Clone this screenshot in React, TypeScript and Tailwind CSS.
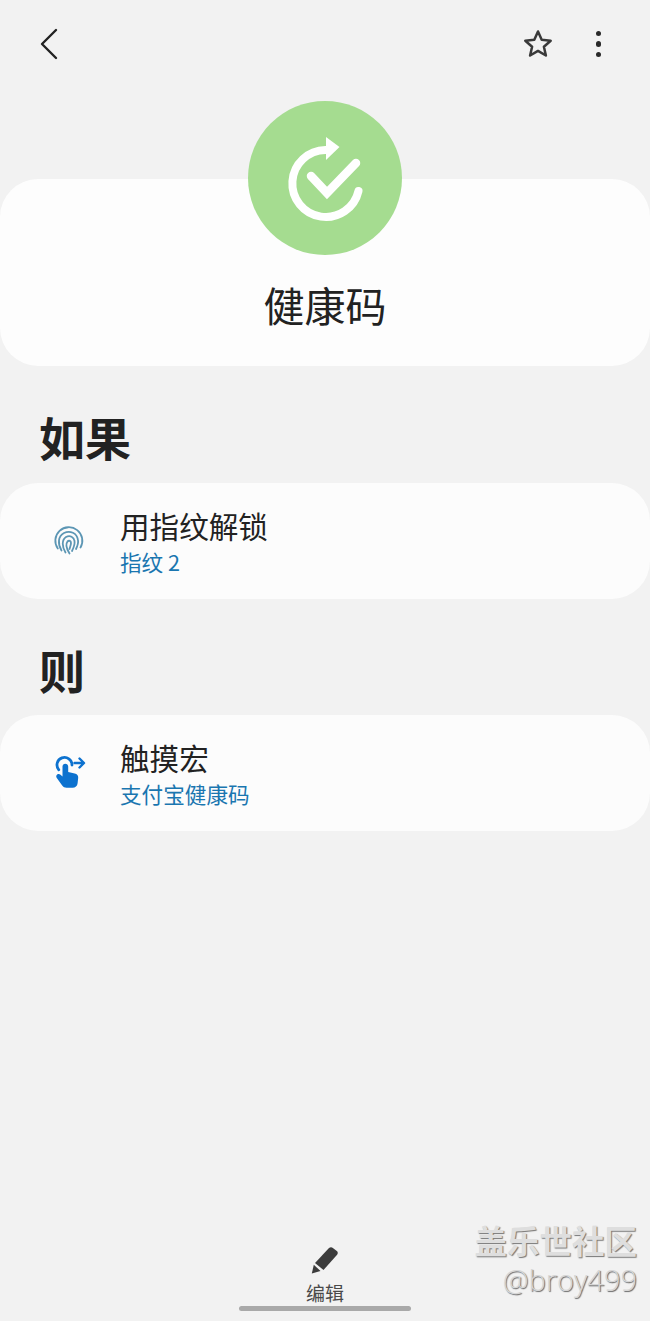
const cjk = { fontFamily: '"Noto Sans CJK SC", "Noto Sans", sans-serif' };

function Fingerprint() {
  return (
    <svg width="32" height="32" viewBox="0 0 32 32" fill="none" stroke="#5c96b4" strokeWidth="1.800" strokeLinecap="round">
      <path d="M4.800 23.500A13.500 13.500 0 1 1 27.500 22.500" />
      <path d="M8.500 25.500C4.500 19 5 11 11 8c6-3 13 0 14 7 .5 3-.5 6-2 9" />
      <path d="M12.500 27.500C9 22 8.500 15 13 12c4-2 8 0 8.500 4 .5 3-1 7-2.500 10" />
      <path d="M16.500 28.500C13 23 12.500 19 14.500 16.500c1.500-1.500 3.500-.5 3.500 1.500 0 2-1 4-1.500 6" />
    </svg>
  );
}

function TouchMacro() {
  return (
    <svg width="34" height="36" viewBox="0 0 34 36" fill="none">
      <path d="M6.800 14.800A7.500 7.500 0 1 1 20 10" stroke="#0d72cf" strokeWidth="2.800" strokeLinecap="round" />
      <path d="M22.500 8h9M27.500 3.500l4.500 4.500-4.500 4.500" stroke="#0d72cf" strokeWidth="2.400" strokeLinecap="round" strokeLinejoin="round" />
      <path
        d="M10.500 11.500c0-1.700 1.200-2.800 2.800-2.800s2.900 1.100 2.900 2.800v5.500l6.500 1.500c2.400.5 3.700 2.200 3.500 4.300l-.6 5.400c-.3 2.800-2.300 4.500-5 4.500h-6c-2 0-3.300-.7-4.400-2.200L4.800 23c-.9-1.300-.7-2.700.4-3.500 1-.7 2.300-.6 3.300.3l2 1.800z"
        fill="#0d72cf"
      />
    </svg>
  );
}

function Row({ icon, title, sub }: { icon: React.ReactNode; title: string; sub: string }) {
  return (
    <div className="flex h-[116px] items-center rounded-[38px] bg-[#fcfcfc]">
      <div className="flex w-[120px] shrink-0 justify-center pl-[18px]">{icon}</div>
      <div className="flex flex-col">
        <div className="text-[29.600px] leading-[40px] text-[#222222]">{title}</div>
        <div className="mt-[1px] text-[21.600px] leading-[30px] text-[#1a76b0]">{sub}</div>
      </div>
    </div>
  );
}

export default function App() {
  return (
    <div className="relative flex h-[1321px] w-[650px] flex-col overflow-hidden bg-[#f2f2f2]" style={cjk}>
      <header className="flex h-[101px] shrink-0 items-start justify-between pt-[27px]">
        <button className="ml-[38px]">
          <svg width="22" height="34" viewBox="0 0 22 34" fill="none" stroke="#222222" strokeWidth="2.400" strokeLinecap="round" strokeLinejoin="round">
            <path d="M18 3 4 17l14 14" />
          </svg>
        </button>
        <div className="mr-[49px] flex h-[34px] items-center gap-[43px]">
          <svg width="30" height="30" viewBox="0 0 30 30" fill="none" stroke="#3a3a3a" strokeWidth="2.500" strokeLinejoin="round">
            <path d="M15 2.500l3.700 8.300 9 .9-6.800 6 2 8.800-7.900-4.600-7.900 4.600 2-8.800-6.800-6 9-.9z" />
          </svg>
          <div className="flex flex-col gap-[5px]">
            <span className="h-[5.500px] w-[5.500px] rounded-full bg-[#2a2a2a]" />
            <span className="h-[5.500px] w-[5.500px] rounded-full bg-[#2a2a2a]" />
            <span className="h-[5.500px] w-[5.500px] rounded-full bg-[#2a2a2a]" />
          </div>
        </div>
      </header>

      <div className="relative z-10 mx-auto -mb-[76px] flex h-[154px] w-[154px] shrink-0 items-center justify-center rounded-full bg-[#a5dc90]">
        <svg width="154" height="154" viewBox="0 0 154 154" fill="none">
          <path d="M110.500 90a33.500 33.500 0 1 1-33-41" stroke="#fff" strokeWidth="8" strokeLinecap="round" />
          <path d="M78 36l13.500 10L78 59z" fill="#fff" />
          <path d="M63 75l16 17 29-30" stroke="#fff" strokeWidth="8.500" strokeLinecap="round" />
        </svg>
      </div>

      <section className="flex h-[187px] shrink-0 items-end justify-center rounded-[38px] bg-[#fdfdfd] pb-[33px]">
        <h1 className="text-[41px] leading-[58px] font-normal text-[#222222]">健康码</h1>
      </section>

      <h2 className="mt-[40px] ml-[39px] text-[46px] leading-[60px] font-semibold text-[#222222]">如果</h2>
      <div className="mt-[17px]">
        <Row icon={<Fingerprint />} title="用指纹解锁" sub="指纹 2" />
      </div>

      <h2 className="mt-[40px] ml-[39px] text-[46px] leading-[60px] font-semibold text-[#222222]">则</h2>
      <div className="mt-[16px]">
        <Row icon={<TouchMacro />} title="触摸宏" sub="支付宝健康码" />
      </div>

      <footer className="mt-auto flex shrink-0 flex-col items-center pb-[10px]">
        <svg className="mb-[6px]" width="30" height="28" viewBox="0 0 30 28" fill="#3c3c3c">
          <path d="M19 2c1.200-1 2.700-1 3.900-.1l3.900 3c1.200 1 1.300 2.600.3 3.800L13.500 24 5 17z" />
          <path d="M3.800 18.800 10.500 25 1.800 27.500z" />
        </svg>
        <span className="text-[19px] leading-[26px] text-[#4a4a4a]">编辑</span>
        <div className="h-[5px] w-[172px] rounded-full bg-[#a9a9a9]" />
      </footer>

      <div className="absolute right-[13px] bottom-[23px] flex flex-col items-end">
        <span className="text-[32.500px] leading-[44px] font-bold text-[#dedede] [text-shadow:1px_1px_1px_#777777]">盖乐世社区</span>
        <span className="text-[29px] leading-[36px] font-light text-[#d6d6d6] [text-shadow:1px_1px_1px_#666666]" style={{ fontFamily: '"Open Sans", sans-serif' }}>@broy499</span>
      </div>
    </div>
  );
}
